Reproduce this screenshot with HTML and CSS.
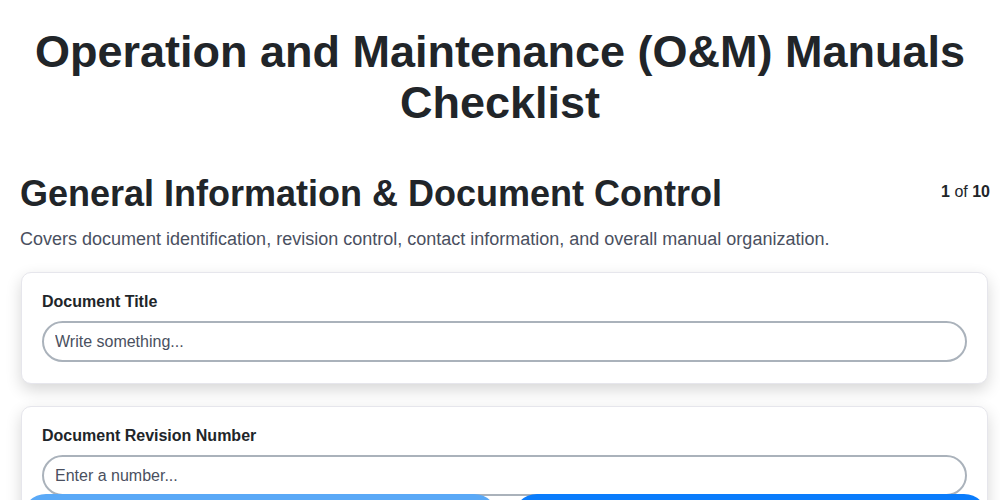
FILE: index.html
```
<!DOCTYPE html>
<html>
    <head>
        <title>O&amp;M Manuals Checklist</title>
        <meta name="viewport" content="width=device-width, initial-scale=1">
        <link rel="stylesheet" href="styles.css">
    </head>

    <body>
        <h1 class="page-title">Operation and Maintenance (O&amp;M) Manuals Checklist</h1>

        <div class="section">
            <div class="section-head">
                <h2 class="section-title">General Information &amp; Document Control</h2>
                <div class="step-count"><b>1</b> of <b>10</b></div>
            </div>
            <p class="section-desc">Covers document identification, revision control, contact information, and overall manual organization.</p>

            <div class="card">
                <label class="field-label">Document Title</label>
                <input class="field-input" type="text" placeholder="Write something...">
            </div>

            <div class="card">
                <label class="field-label">Document Revision Number</label>
                <input class="field-input" type="text" placeholder="Enter a number...">
            </div>
        </div>

        <div class="nav-bar">
            <button class="nav-btn prev">Previous</button>
            <button class="nav-btn next">Next</button>
        </div>
    </body>
</html>
```

FILE: styles.css
```
body {
    margin: 0;
    padding: 0;
    font-family: "Liberation Sans", Arial, sans-serif;
    color: #212529;
    background: #fff;
    overflow: hidden;
}

.page-title {
    margin: 26px 20px 0;
    font-size: 45px;
    line-height: 51px;
    font-weight: bold;
    text-align: center;
}

.section {
    padding: 44px 12px 0 20px;
}

.section-head {
    display: flex;
    justify-content: space-between;
    align-items: flex-start;
}

.section-title {
    margin: 0;
    font-size: 36px;
    line-height: 44px;
    font-weight: bold;
}

.step-count {
    font-size: 16px;
    margin-top: 11px;
    margin-right: -2px;
}

.section-desc {
    margin: 13px 0 22px;
    font-size: 18px;
    color: #4a5060;
}

.card {
    background: #fff;
    border: 1px solid #e6e6ec;
    border-radius: 10px;
    box-shadow: 0 6px 16px rgba(0, 0, 0, 0.16);
    padding: 20px 20px 21px;
    margin: 0 0 22px 1px;
    display: flex;
    flex-direction: column;
}

.field-label {
    font-size: 16px;
    font-weight: bold;
    margin-bottom: 10px;
}

.field-input {
    height: 41px;
    box-sizing: border-box;
    border: 2px solid #aab2bb;
    border-radius: 21px;
    padding: 0 11px;
    font-family: "Liberation Sans", Arial, sans-serif;
    font-size: 16px;
    color: #212529;
    outline: none;
}

.field-input::placeholder {
    color: #4a5060;
}

/* only the top edge of the buttons shows in the frame */
.nav-bar {
    position: fixed;
    left: 0;
    right: 0;
    bottom: -58px;
    display: flex;
    gap: 15px;
    padding: 0 12px 0 22px;
}

.nav-bar .nav-btn {
    flex: 1;
    height: 64px;
    padding-top: 28px;
    border: none;
    border-radius: 24px;
    color: #fff;
    font-family: "Liberation Sans", Arial, sans-serif;
    font-size: 17px;
    font-weight: bold;
}

.nav-btn.prev {
    background: #5aa9f7;
}

.nav-btn.next {
    background: #0a7cfc;
}
```
